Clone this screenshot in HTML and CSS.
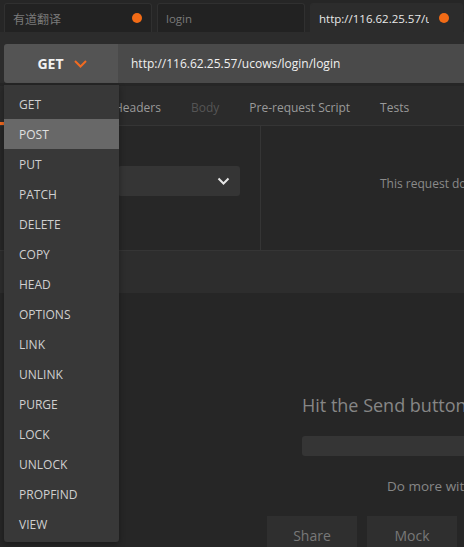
FILE: index.html
```html
<!DOCTYPE html>
<html>
<head>
<meta charset="utf-8">
<link rel="stylesheet" href="styles.css">
</head>
<body>
<div class="app">
  <div class="tabs">
    <div class="tab"><span class="tab-title cjk">有道翻译</span><span class="dot"></span></div>
    <div class="tab"><span class="tab-title">login</span></div>
    <div class="tab active"><span class="tab-title">http://116.62.25.57/ucows/login/login</span><span class="dot"></span></div>
  </div>
  <div class="band"></div>
  <div class="reqbar">
    <div class="method">GET
      <svg class="chev" width="13" height="8" viewBox="0 0 13 8"><path d="M1 1 L6.5 6.5 L12 1" fill="none" stroke="#f26b21" stroke-width="2"/></svg>
    </div>
    <div class="url">http://116.62.25.57/ucows/login/login</div>
  </div>
  <div class="subtabs">
    <div class="subtab sel">Authorization</div>
    <div class="subtab">Headers</div>
    <div class="subtab dim">Body</div>
    <div class="subtab">Pre-request Script</div>
    <div class="subtab">Tests</div>
  </div>
  <div class="panel">
    <div class="panel-left">
      <div class="select">
        <svg width="13" height="8" viewBox="0 0 13 8"><path d="M1.5 1.5 L6.5 6.5 L11.5 1.5" fill="none" stroke="#e6e6e6" stroke-width="2"/></svg>
      </div>
    </div>
    <div class="panel-right">This request does not use any authorization.</div>
  </div>
  <div class="resp-head"></div>
  <div class="resp-body">
    <div class="hit">Hit the Send button to get a response.</div>
    <div class="bar"></div>
    <div class="more">Do more with requests</div>
    <div class="btns">
      <div class="btn">Share</div>
      <div class="btn">Mock</div>
      <div class="btn">Monitor</div>
    </div>
  </div>

  <ul class="dropdown">
    <li>GET</li>
    <li class="hl">POST</li>
    <li>PUT</li>
    <li>PATCH</li>
    <li>DELETE</li>
    <li>COPY</li>
    <li>HEAD</li>
    <li>OPTIONS</li>
    <li>LINK</li>
    <li>UNLINK</li>
    <li>PURGE</li>
    <li>LOCK</li>
    <li>UNLOCK</li>
    <li>PROPFIND</li>
    <li>VIEW</li>
  </ul>
</div>
</body>
</html>
```

FILE: styles.css
```css
* { box-sizing: border-box; }
html, body {
  margin: 0;
  padding: 0;
  width: 464px;
  height: 547px;
  overflow: hidden;
  background: #262626;
  font-family: "Open Sans", "Noto Sans", "Noto Sans CJK SC", sans-serif;
  font-size: 12px;
}
.app {
  position: relative;
  width: 464px;
  height: 547px;
  overflow: hidden;
  display: flex;
  flex-direction: column;
}
.tabs {
  height: 32px;
  flex: none;
  display: flex;
  gap: 5px;
  padding: 3px 0 0 4px;
  background: #262626;
  white-space: nowrap;
}
.tab {
  flex: none;
  width: 148px;
  height: 29px;
  display: flex;
  align-items: center;
  padding: 0 9px 0 8px;
  background: #222222;
  border: 1px solid #303030;
  border-bottom: none;
  border-radius: 3px 3px 0 0;
  color: #7a7a7a;
  font-size: 11.5px;
}
.tab.active {
  width: 153px;
  background: #2c2c2c;
  border-color: #2c2c2c;
  color: #e8e8e8;
  padding-right: 13px;
}
.tab-title {
  flex: 1;
  min-width: 0;
  overflow: hidden;
  white-space: nowrap;
}
.tab.active .tab-title { margin-right: 10px; }
.cjk { font-family: "Noto Sans CJK SC", sans-serif; font-size: 12px; }
.dot {
  flex: none;
  width: 10px;
  height: 10px;
  border-radius: 50%;
  background: #f26b16;
}
.band {
  height: 12px;
  flex: none;
  background: #2c2c2c;
}
.reqbar {
  flex: none;
  height: 39px;
  display: flex;
  padding-left: 4px;
  background: #2c2c2c;
}
.method {
  flex: none;
  width: 115px;
  display: flex;
  align-items: center;
  justify-content: center;
  gap: 10px;
  background: #545454;
  border-radius: 3px 0 0 3px;
  border-right: 1px solid #4a4a4a;
  color: #f2f2f2;
  font-weight: 700;
  font-size: 14px;
  padding-left: 2px;
}
.chev { margin-top: 1px; }
.url {
  flex: 1;
  display: flex;
  align-items: center;
  padding-left: 12px;
  background: #4a4a4a;
  color: #f0f0f0;
  font-size: 12px;
  white-space: nowrap;
}
.subtabs {
  flex: none;
  margin-top: 3px;
  height: 40px;
  display: flex;
  align-items: stretch;
  background: #2b2b2b;
  border-bottom: 1px solid #353535;
  white-space: nowrap;
  color: #9a9a9a;
  font-size: 12px;
}
.subtab {
  display: flex;
  align-items: center;
  padding: 3px 15px 0;
}
.subtab.sel {
  width: 99px;
  color: #e0e0e0;
  border-bottom: 3px solid #f26b21;
  padding-top: 5px;
}
.subtab.dim { color: #555; }
.panel {
  flex: none;
  height: 124px;
  display: flex;
  background: #272727;
}
.panel-left {
  flex: none;
  width: 261px;
  border-right: 1px solid #353535;
  padding: 40px 0 0 118px;
}
.select {
  width: 122px;
  height: 30px;
  background: #353535;
  border-radius: 3px;
  display: flex;
  align-items: center;
  justify-content: flex-end;
  padding-right: 10px;
}
.panel-right {
  flex: 1;
  padding: 49px 0 0 119px;
  color: #8a8a8a;
  font-size: 12px;
  white-space: nowrap;
  overflow: hidden;
}
.resp-head {
  flex: none;
  height: 43px;
  background: #2d2d2d;
  border-top: 1px solid #353535;
}
.resp-body {
  flex: 1;
  background: #262626;
  padding-top: 99px;
  white-space: nowrap;
}
.hit {
  padding-left: 302px;
  color: #868686;
  font-size: 18px;
  line-height: 26px;
}
.bar {
  margin: 18px 0 0 302px;
  width: 400px;
  height: 20px;
  background: #353535;
  border-radius: 3px;
}
.more {
  margin-top: 20px;
  padding-left: 387px;
  color: #868686;
  font-size: 13.5px;
  line-height: 20px;
}
.btns {
  margin-top: 20px;
  padding-left: 267px;
  display: flex;
  gap: 10px;
}
.btn {
  flex: none;
  width: 90px;
  height: 36px;
  background: #2f2f2f;
  color: #787878;
  font-size: 14px;
  display: flex;
  align-items: center;
  justify-content: center;
  padding-top: 3px;
}
.dropdown {
  position: absolute;
  left: 4px;
  top: 85px;
  width: 115px;
  height: 457px;
  margin: 0;
  padding: 4px 0 0 0;
  list-style: none;
  background: #383838;
  border-radius: 0 0 3px 3px;
  box-shadow: 0 2px 6px rgba(0,0,0,0.35);
}
.dropdown li {
  height: 30px;
  line-height: 30px;
  padding: 1px 0 0 15px;
  color: #d0d0d0;
  font-size: 12px;
}
.dropdown li.hl {
  background: #686868;
  color: #e0e0e0;
}
```
